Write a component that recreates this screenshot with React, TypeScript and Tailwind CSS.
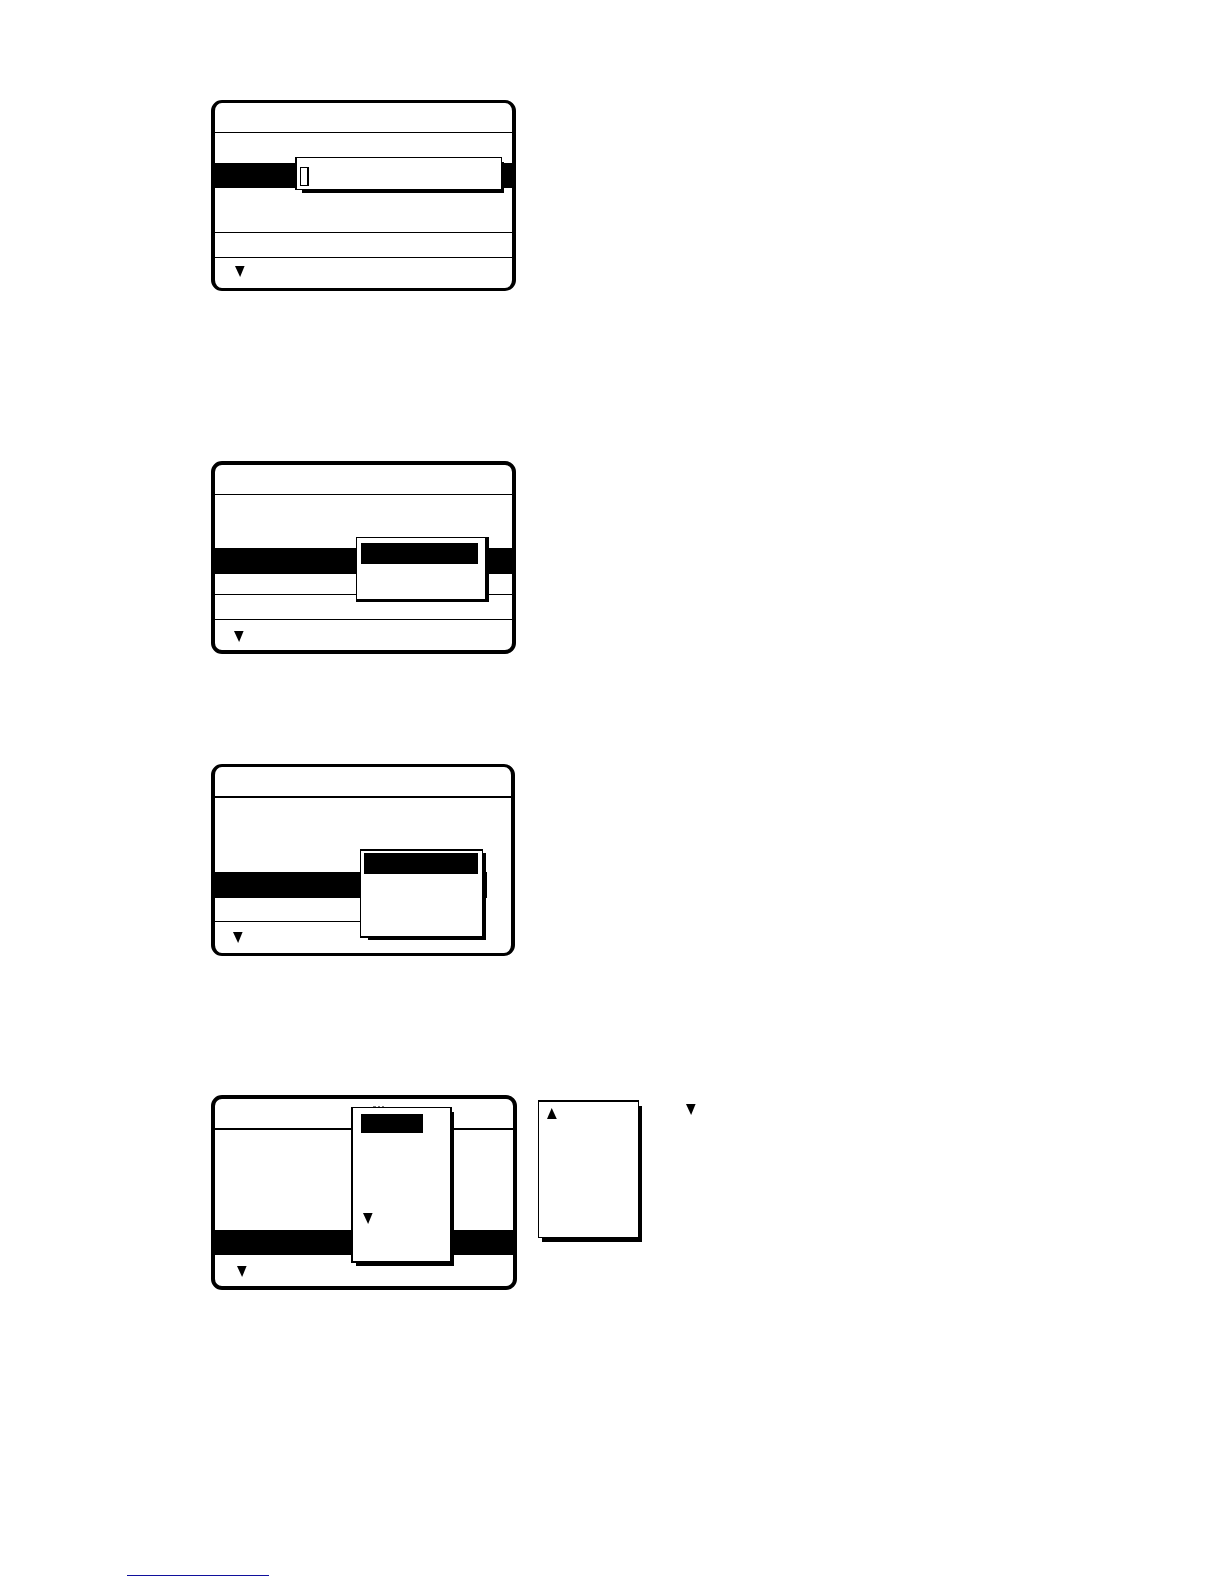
import type { ReactNode } from "react";

function Arrow({ up = false }: { up?: boolean }) {
  return (
    <svg width="10" height="11" viewBox="0 0 10 11" className="block shrink-0" aria-hidden="true">
      <path d={up ? "M4.7 0L9.8 11H0Z" : "M0 0H9.6L5.1 11Z"} fill="#000" />
    </svg>
  );
}

function Screen({ className, children }: { className: string; children: ReactNode }) {
  return (
    <section className={`relative shrink-0 rounded-[11px] border-4 border-black bg-white ${className}`}>
      {children}
    </section>
  );
}

function Popup({
  place,
  shadow,
  frame,
  children,
}: {
  place: string;
  shadow: string;
  frame: string;
  children?: ReactNode;
}) {
  return (
    <div className={place}>
      <div className={`absolute bg-black ${shadow}`} />
      <div className={`relative h-full border-black bg-white ${frame}`}>{children}</div>
    </div>
  );
}

export default function App() {
  return (
    <main className="bg-white font-['Liberation_Sans',sans-serif] text-black">
      <div className="flex flex-col items-start pt-[100px] pl-[211px]">
        <Screen className="w-[305px] border-y-3">
          <header className="h-[30px] border-b border-black" />
          <div className="mt-[30px] h-[25px] bg-black" />
          <div className="mt-11 h-[25px] border-t border-black" />
          <footer className="h-[31px] border-t border-black pt-2 pl-5">
            <Arrow />
          </footer>
          <Popup
            place="absolute top-[54px] left-20 h-[33px] w-[207px]"
            shadow="top-[5px] left-[7px] -right-[2px] -bottom-[3px]"
            frame="border border-l-2"
          >
            <input
              type="text"
              aria-label="Name"
              className="block h-full w-full bg-transparent pl-4 text-sm outline-none"
            />
            <span className="absolute top-[9px] left-[3px] h-[19px] w-[9px] border border-r-2 border-black" />
          </Popup>
        </Screen>

        <Screen className="mt-[170px] w-[305px]">
          <header className="h-[30px] border-b border-black" />
          <div className="mt-[53px] h-[26px] bg-black" />
          <div className="mt-5 h-[25px] border-t border-black" />
          <footer className="h-[31px] border-t border-black pt-[11px] pl-[19px]">
            <Arrow />
          </footer>
          <Popup
            place="absolute top-[72px] left-[141px] h-[65px] w-[133px]"
            shadow="inset-0"
            frame="border border-r-4 border-b-3 pt-[5px] pl-1"
          >
            <button type="button" aria-label="Selected item" className="block h-[21px] w-[117px] bg-black" />
          </Popup>
        </Screen>

        <Screen className="mt-[110px] w-[304px] border-y-3">
          <header className="h-[31px] border-b-2 border-black" />
          <div className="mt-[74px] h-[26px] w-[272px] bg-black" />
          <div className="mt-[23px] w-[145px] border-t border-black" />
          <footer className="h-[31px] pt-[10px] pl-[18px]">
            <Arrow />
          </footer>
          <Popup
            place="absolute top-[82px] left-[145px] h-[89px] w-[123px]"
            shadow="top-1 left-2 -right-[3px] -bottom-[2px]"
            frame="border border-y-2 pt-[2px] pl-[3px]"
          >
            <button type="button" aria-label="Selected item" className="block h-[21px] w-[114px] bg-black" />
          </Popup>
        </Screen>

        <div className="mt-[139px] flex items-start">
          <Screen className="w-[306px]">
            <header className="h-[31px] border-b-2 border-black" />
            <div className="mt-[100px] h-[25px] bg-black" />
            <footer className="h-[31px] pt-[11px] pl-[22px]">
              <Arrow />
            </footer>
            <svg
              width="12"
              height="2"
              viewBox="0 0 12 2"
              className="absolute top-[7px] left-[158px]"
              aria-hidden="true"
            >
              <path d="M0 .5H3M5 .5H7M9 .5H11" stroke="#777" fill="none" />
            </svg>
            <Popup
              place="absolute top-2 left-[136px] h-[156px] w-[101px]"
              shadow="top-[5px] left-[5px] -right-[2px] -bottom-[3px]"
              frame="border-2 border-t pt-[6px] pl-2"
            >
              <button type="button" aria-label="Selected item" className="block h-[19px] w-[62px] bg-black" />
              <div className="mt-20 pl-[2px]">
                <Arrow />
              </div>
            </Popup>
          </Screen>
          <Popup
            place="relative mt-[5px] ml-[21px] h-[138px] w-[101px] shrink-0"
            shadow="top-[6px] left-1 -right-[3px] -bottom-1"
            frame="border border-t-2 pt-[6px] pl-2"
          >
            <Arrow up />
          </Popup>
          <div className="mt-[9px] ml-[47px]">
            <Arrow />
          </div>
        </div>
      </div>

      <div className="pt-[265px] pb-2 pl-[127px]">
        <a
          href="#top"
          aria-label="Website"
          className="block h-[21px] w-[142px] border-b border-b-[#10109c]"
        />
      </div>
    </main>
  );
}
